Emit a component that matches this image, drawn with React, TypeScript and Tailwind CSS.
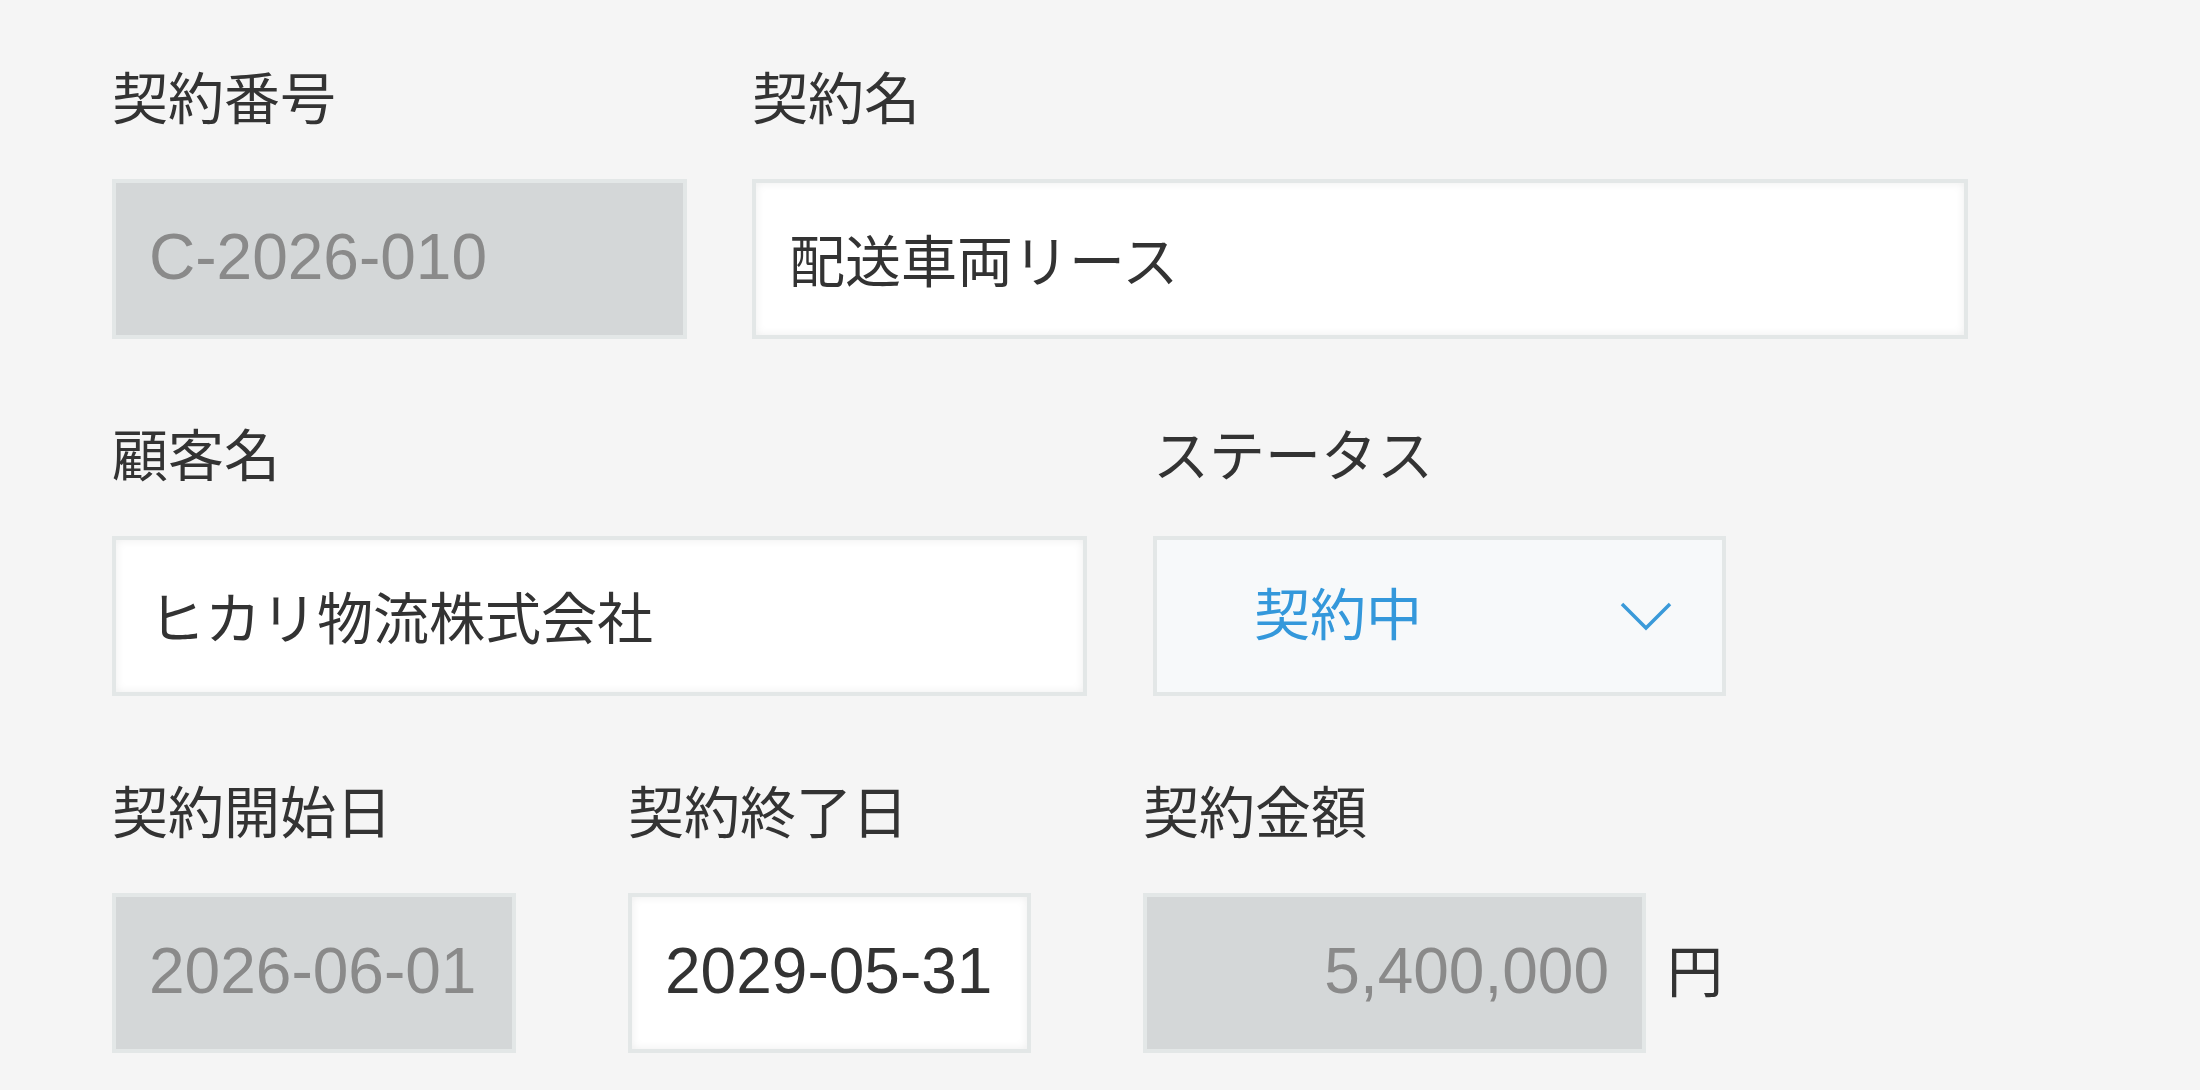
import React from 'react';

const FONT = 'font-["Liberation_Sans","Noto_Sans_CJK_JP",sans-serif]';

function Label({ children }: { children: React.ReactNode }) {
  return <div className="text-[56px] leading-[56px] text-[#333] mb-[51px] whitespace-nowrap">{children}</div>;
}

interface BoxProps {
  value: string;
  width: string;
  disabled?: boolean;
  digits?: boolean;
  right?: boolean;
}

function Box({ value, width, disabled, digits, right }: BoxProps) {
  const base = 'h-[160px] border-[4px] border-[#e3e7e7] outline-none px-[33px] pb-[4px] ' + FONT;
  const tone = disabled
    ? 'bg-[#d4d7d8] text-[#8a8a8a]'
    : 'bg-white text-[#333] shadow-[inset_0_0_10px_rgba(0,0,0,0.07)]';
  const size = digits ? 'text-[64px]' : 'text-[56px]';
  return (
    <input
      readOnly
      value={value}
      className={`${base} ${tone} ${size} ${width} ${right ? 'text-right' : ''}`}
    />
  );
}

export default function App() {
  return (
    <div className={`min-h-screen bg-[#f5f5f5] pl-[112px] pt-[72px] ${FONT}`}>
      <div className="flex gap-[65px]">
        <div className="flex flex-col">
          <Label>契約番号</Label>
          <Box value="C-2026-010" width="w-[575px]" disabled digits />
        </div>
        <div className="flex flex-col">
          <Label>契約名</Label>
          <Box value="配送車両リース" width="w-[1216px]" />
        </div>
      </div>

      <div className="flex gap-[66px] mt-[90px]">
        <div className="flex flex-col">
          <Label>顧客名</Label>
          <Box value="ヒカリ物流株式会社" width="w-[975px]" />
        </div>
        <div className="flex flex-col">
          <Label>ステータス</Label>
          <div className="h-[160px] w-[573px] border-[4px] border-[#e3e7e7] bg-[#f7f9fa] flex items-center pl-[97px] pr-[50px]">
            <span className="text-[56px] text-[#3498db] flex-1">契約中</span>
            <svg width="52" height="32" viewBox="0 0 52 32" fill="none">
              <polyline points="2,4 26,28 50,4" stroke="#3a9ad9" strokeWidth="3.5" />
            </svg>
          </div>
        </div>
      </div>

      <div className="flex gap-[112px] mt-[90px]">
        <div className="flex flex-col">
          <Label>契約開始日</Label>
          <Box value="2026-06-01" width="w-[404px]" disabled digits />
        </div>
        <div className="flex flex-col">
          <Label>契約終了日</Label>
          <Box value="2029-05-31" width="w-[403px]" digits />
        </div>
        <div className="flex flex-col">
          <Label>契約金額</Label>
          <div className="flex items-center gap-[21px]">
            <Box value="5,400,000" width="w-[503px]" disabled digits right />
            <span className="text-[56px] text-[#333]">円</span>
          </div>
        </div>
      </div>
    </div>
  );
}
